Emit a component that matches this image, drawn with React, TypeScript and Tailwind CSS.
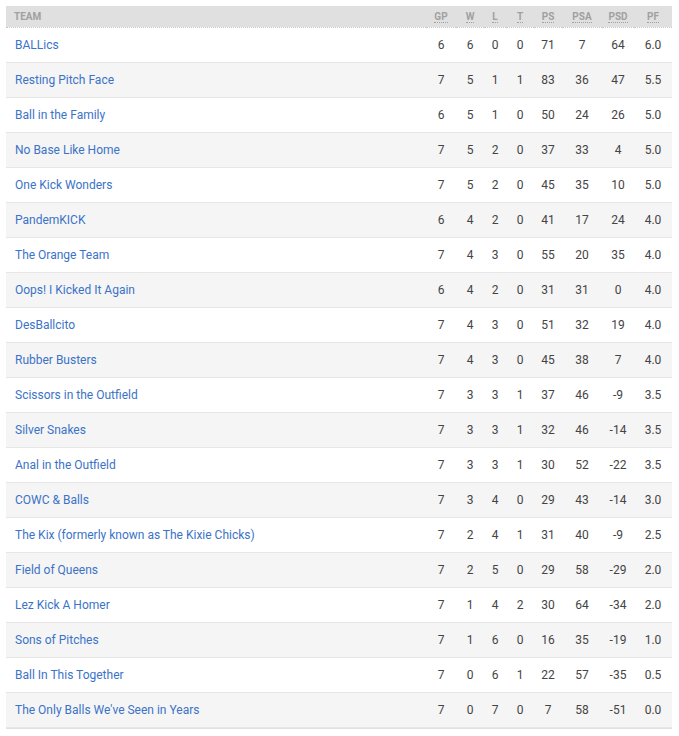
const rows: [string, number, number, number, number, number, number, number, string][] = [
  ["BALLics", 6, 6, 0, 0, 71, 7, 64, "6.0"],
  ["Resting Pitch Face", 7, 5, 1, 1, 83, 36, 47, "5.5"],
  ["Ball in the Family", 6, 5, 1, 0, 50, 24, 26, "5.0"],
  ["No Base Like Home", 7, 5, 2, 0, 37, 33, 4, "5.0"],
  ["One Kick Wonders", 7, 5, 2, 0, 45, 35, 10, "5.0"],
  ["PandemKICK", 6, 4, 2, 0, 41, 17, 24, "4.0"],
  ["The Orange Team", 7, 4, 3, 0, 55, 20, 35, "4.0"],
  ["Oops! I Kicked It Again", 6, 4, 2, 0, 31, 31, 0, "4.0"],
  ["DesBallcito", 7, 4, 3, 0, 51, 32, 19, "4.0"],
  ["Rubber Busters", 7, 4, 3, 0, 45, 38, 7, "4.0"],
  ["Scissors in the Outfield", 7, 3, 3, 1, 37, 46, -9, "3.5"],
  ["Silver Snakes", 7, 3, 3, 1, 32, 46, -14, "3.5"],
  ["Anal in the Outfield", 7, 3, 3, 1, 30, 52, -22, "3.5"],
  ["COWC & Balls", 7, 3, 4, 0, 29, 43, -14, "3.0"],
  ["The Kix (formerly known as The Kixie Chicks)", 7, 2, 4, 1, 31, 40, -9, "2.5"],
  ["Field of Queens", 7, 2, 5, 0, 29, 58, -29, "2.0"],
  ["Lez Kick A Homer", 7, 1, 4, 2, 30, 64, -34, "2.0"],
  ["Sons of Pitches", 7, 1, 6, 0, 16, 35, -19, "1.0"],
  ["Ball In This Together", 7, 0, 6, 1, 22, 57, -35, "0.5"],
  ["The Only Balls We've Seen in Years", 7, 0, 7, 0, 7, 58, -51, "0.0"],
];

const cols = [
  { key: "GP", title: "Games Played", w: "w-[30px]" },
  { key: "W", title: "Wins", w: "w-[28px]" },
  { key: "L", title: "Losses", w: "w-[22px]" },
  { key: "T", title: "Ties", w: "w-[28px]" },
  { key: "PS", title: "Points Scored", w: "w-[28px]" },
  { key: "PSA", title: "Points Scored Against", w: "w-[40px]" },
  { key: "PSD", title: "Point Differential", w: "w-[32px]" },
  { key: "PF", title: "Points For", w: "w-[38px]" },
];

export default function App() {
  return (
    <div className="bg-white pt-[6px] pl-[6px] font-['Roboto',sans-serif]">
      <div className="w-[666px] border-b border-[#e0e0e0]">
        <table className="w-full table-fixed border-collapse">
          <thead>
            <tr className="h-[21px] bg-[#e0e0e0] border-b border-dotted border-b-[#c8c8c8]">
              <th className="pl-[8px] text-left text-[10px] font-bold uppercase text-[#a0a0a0]">Team</th>
              {cols.map((c) => (
                <th key={c.key} className={`${c.w} text-center text-[10px] font-bold text-[#a0a0a0]`}>
                  <abbr title={c.title} className="no-underline border-b border-dotted border-[#a0a0a0]">
                    {c.key}
                  </abbr>
                </th>
              ))}
            </tr>
          </thead>
          <tbody>
            {rows.map((r, i) => (
              <tr
                key={r[0]}
                className={`h-[35px] border-b border-[#e6e6e6] ${i % 2 === 1 ? "bg-[#f5f5f5]" : "bg-white"}`}
              >
                <td className="pl-[9px] text-[12px] text-[#3b73c7]">
                  <a href="#">{r[0]}</a>
                </td>
                {r.slice(1).map((v, j) => (
                  <td key={j} className="text-center text-[12px] text-[#444]">
                    {v}
                  </td>
                ))}
              </tr>
            ))}
          </tbody>
        </table>
      </div>
    </div>
  );
}
